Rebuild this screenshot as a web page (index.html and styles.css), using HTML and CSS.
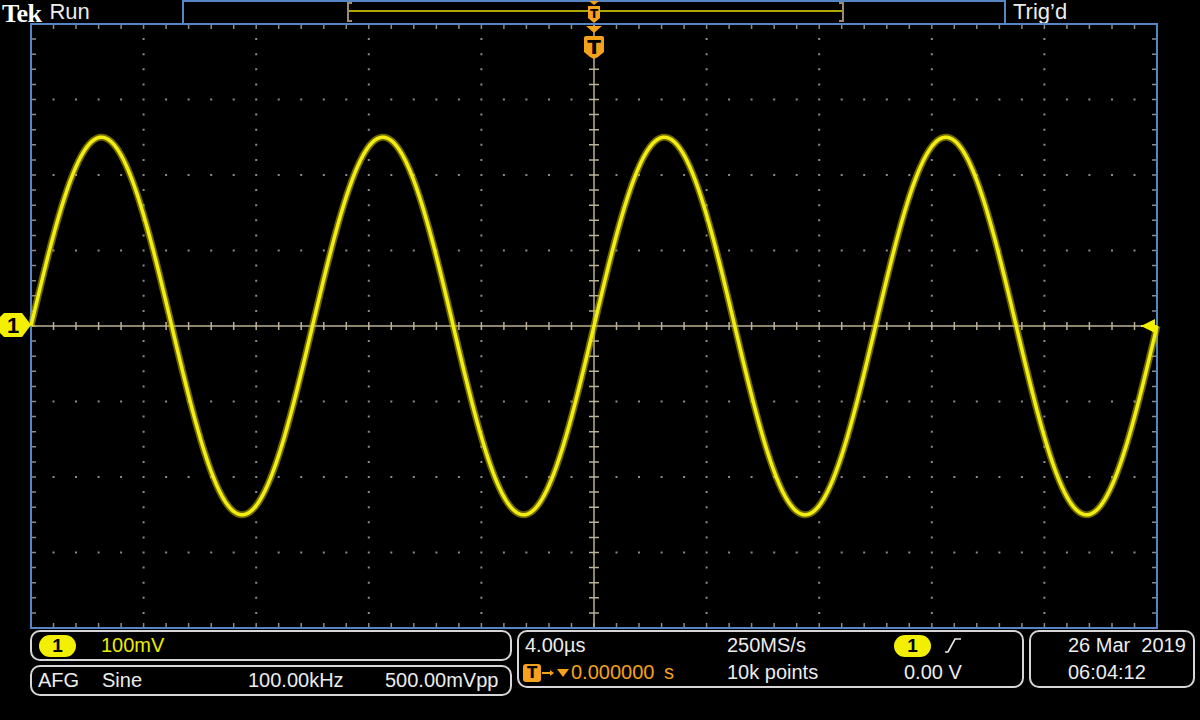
FILE: index.html
```html
<!DOCTYPE html>
<html lang="en">

<head>
    <meta charset="UTF-8">
    <title>Tek Scope</title>
    <link rel="stylesheet" href="styles.css">
</head>

<body>
    <div class="scope">
        <header class="topbar">
            <div class="brand">
                <span class="tek">Tek</span>
                <span class="state">Run</span>
            </div>
            <div class="record">
                <svg width="824" height="23" viewBox="0 0 824 23">
                    <rect x="1" y="1" width="822" height="30" class="frame" />
                    <line x1="167" y1="11" x2="660" y2="11" class="rec-trace" />
                    <path d="M170 3 H166 V21 H170" class="bracket" />
                    <path d="M657 3 H661 V21 H657" class="bracket" />
                    <polygon points="407,1 417,1 412,5" class="orange" />
                    <path d="M406 6 H418 V18 L412 23 L406 18 Z" class="orange" />
                    <text x="412" y="18" class="t-mark small">T</text>
                </svg>
            </div>
            <div class="trig">Trig’d</div>
        </header>

        <svg class="screen" width="1200" height="607" viewBox="0 23 1200 607">
            <path id="dots" class="dots" />
            <path id="ticks" class="ticks" />
            <path id="center" class="center" />
            <rect x="31" y="24" width="1126" height="604" class="frame" />
            <path id="glow" class="glow" />
            <path id="trace" class="trace" />

            <!-- trigger position marker -->
            <polygon points="586,26 602,26 594,33" class="orange" />
            <path d="M586 36 H602 Q604 36 604 38 V52 L598 57 L594 59 L590 57 L584 52 V38 Q584 36 586 36 Z" class="orange" />
            <text x="594" y="54" class="t-mark">T</text>

            <!-- channel 1 ground marker -->
            <polygon points="4,313 22,313 31,325 22,337 4,337 0,333 0,317" class="yellow" />
            <text x="13" y="333" class="ch-mark">1</text>

            <!-- trigger level marker -->
            <line x1="1141" y1="326" x2="1157" y2="326" class="level" />
            <polygon points="1141,326 1155,319 1155,333" class="yellow" />
        </svg>

        <footer class="status">
            <div class="stack">
                <div class="panel ch">
                    <span class="pill">1</span>
                    <span class="volts">100mV</span>
                </div>
                <div class="panel afg">
                    <span>AFG</span>
                    <span>Sine</span>
                    <span>100.00kHz</span>
                    <span>500.00mVpp</span>
                </div>
            </div>
            <div class="panel horiz">
                <span>4.00µs</span>
                <span>250MS/s</span>
                <span class="trig-src">
                    <span class="pill">1</span>
                    <svg class="slope" width="18" height="17" viewBox="0 0 18 17">
                        <polyline points="1,15 4,15 11,2 17,2" />
                    </svg>
                </span>
                <span class="delay">
                    <span class="t-box">T</span>
                    <svg width="30" height="18" viewBox="0 0 30 18">
                        <line x1="1" y1="9" x2="10" y2="9" class="arrow" />
                        <polygon points="9,6 13,9 9,12" class="orange" />
                        <polygon points="16,5 28,5 22,13" class="orange" />
                    </svg>
                    <span class="delay-val">0.000000 s</span>
                </span>
                <span>10k points</span>
                <span class="level-val">0.00 V</span>
            </div>
            <div class="panel clock">
                <span>26 Mar  2019</span>
                <span>06:04:12</span>
            </div>
        </footer>
    </div>

    <script>
        const L = 31, R = 1157, T = 24, B = 628;
        const DX = (R - L) / 10, DY = (B - T) / 8;
        const CX = L + DX * 5, CY = T + DY * 4;

        function buildGrid() {
            let dots = '';
            let ticks = '';
            let center = `M${L} ${CY} H${R} M${CX} ${T} V${B}`;

            // dotted major lines
            for (let i = 1; i < 10; i++) {
                if (i === 5) continue;
                const x = L + i * DX;
                for (let k = 1; k < 40; k++) {
                    const y = T + k * DY / 5;
                    dots += `M${(x - 1).toFixed(1)} ${(y - 1).toFixed(1)}h2v2h-2z`;
                }
            }
            for (let j = 1; j < 8; j++) {
                if (j === 4) continue;
                const y = T + j * DY;
                for (let k = 1; k < 50; k++) {
                    const x = L + k * DX / 5;
                    dots += `M${(x - 1).toFixed(1)} ${(y - 1).toFixed(1)}h2v2h-2z`;
                }
            }

            // ticks along the edges and the center cross
            for (let k = 1; k < 50; k++) {
                const x = (L + k * DX / 5).toFixed(1);
                ticks += `M${x} ${T + 1}v4M${x} ${B - 1}v-4`;
                center += `M${x} ${CY - 4}v8`;
            }
            for (let k = 1; k < 40; k++) {
                const y = (T + k * DY / 5).toFixed(1);
                ticks += `M${L + 1} ${y}h4M${R - 1} ${y}h-4`;
                center += `M${CX - 5} ${y}h10`;
            }

            document.getElementById('dots').setAttribute('d', dots);
            document.getElementById('ticks').setAttribute('d', ticks);
            document.getElementById('center').setAttribute('d', center);
        }

        function buildTrace() {
            // 100 kHz sine, 500 mVpp, 4 us/div, 100 mV/div
            const period = DX * 2.5;
            const amp = DY * 2.5;
            let d = '';
            for (let x = L; x <= R; x += 1) {
                const y = CY - amp * Math.sin(2 * Math.PI * (x - CX) / period);
                d += (d ? 'L' : 'M') + x + ' ' + y.toFixed(2);
            }
            document.getElementById('glow').setAttribute('d', d);
            document.getElementById('trace').setAttribute('d', d);
        }

        buildGrid();
        buildTrace();
    </script>
</body>

</html>
```

FILE: styles.css
```css
body {
    margin: 0;
    background: #000;
    color: #ececec;
    font-family: "Liberation Sans", Arial, sans-serif;
    overflow: hidden;
}

.scope {
    width: 1200px;
    height: 720px;
    background: #000;
}

svg {
    display: block;
}

/* Top bar */
.topbar {
    display: flex;
    height: 23px;
}

.brand {
    width: 182px;
    display: flex;
    align-items: flex-start;
}

.tek {
    font-family: "Liberation Serif", "Times New Roman", serif;
    font-weight: bold;
    font-size: 26px;
    line-height: 26px;
    margin-top: 1px;
    letter-spacing: -0.5px;
    color: #fff;
    margin-left: 2px;
}

.state {
    font-size: 22px;
    line-height: 23px;
    margin-left: 8px;
}

.record {
    width: 824px;
}

.trig {
    font-size: 22px;
    line-height: 23px;
    padding-left: 7px;
}

.frame {
    fill: none;
    stroke: #5585c2;
    stroke-width: 2;
}

.rec-trace {
    stroke: #e8e000;
    stroke-width: 1.5;
}

.bracket {
    fill: none;
    stroke: #9c8c6c;
    stroke-width: 2;
}

.orange {
    fill: #f4a21c;
}

.yellow {
    fill: #f2f000;
}

.t-mark {
    font-family: "DejaVu Sans", sans-serif;
    font-weight: bold;
    font-size: 20px;
    fill: #000;
    text-anchor: middle;
}

.t-mark.small {
    font-size: 12px;
}

.ch-mark {
    font-family: "Liberation Sans", Arial, sans-serif;
    font-weight: bold;
    font-size: 22px;
    fill: #000;
    text-anchor: middle;
}

/* Graticule */
.dots {
    fill: #8a8a8a;
}

.ticks {
    fill: none;
    stroke: #8a8a8a;
    stroke-width: 1.5;
}

.center {
    fill: none;
    stroke: #bcb095;
    stroke-width: 1.5;
}

.glow {
    fill: none;
    stroke: #c4bc00;
    stroke-width: 7;
    stroke-opacity: 0.55;
}

.trace {
    fill: none;
    stroke: #f4ee10;
    stroke-width: 3.5;
}

.level {
    stroke: #f2f000;
    stroke-width: 2;
}

/* Status readouts */
.status {
    display: flex;
    gap: 5px;
    padding-left: 30px;
    font-size: 20px;
    line-height: 27px;
}

.stack {
    width: 482px;
    display: flex;
    flex-direction: column;
    gap: 4px;
}

.panel {
    border: 2px solid #d6d6d6;
    border-radius: 10px;
    box-sizing: border-box;
}

.ch {
    height: 31px;
    display: flex;
    align-items: center;
    padding-left: 7px;
}

.pill {
    display: inline-flex;
    justify-content: center;
    align-items: center;
    width: 37px;
    height: 22px;
    border-radius: 11px;
    background: #f2f000;
    color: #000;
    font-weight: bold;
    font-size: 19px;
}

.volts {
    margin-left: 25px;
    color: #ecec00;
}

.afg {
    height: 31px;
    display: grid;
    grid-template-columns: 64px 146px 137px auto;
    align-items: center;
    padding-left: 6px;
}

.horiz {
    width: 507px;
    height: 58px;
    display: grid;
    grid-template-columns: 202px 167px auto;
    grid-template-rows: 27px 27px;
    align-items: center;
    padding-left: 6px;
}

.trig-src {
    display: flex;
    align-items: center;
}

.slope {
    margin-left: 13px;
}

.slope polyline {
    fill: none;
    stroke: #ececec;
    stroke-width: 1.6;
}

.delay {
    display: flex;
    align-items: center;
    margin-left: -2px;
    color: #f4a21c;
}

.t-box {
    width: 18px;
    height: 18px;
    border-radius: 3px;
    background: #f4a21c;
    color: #000;
    font-family: "DejaVu Sans", sans-serif;
    font-weight: bold;
    font-size: 15px;
    line-height: 18px;
    text-align: center;
}

.arrow {
    stroke: #f4a21c;
    stroke-width: 2;
}

.delay-val {
    word-spacing: 4px;
}

.level-val {
    padding-left: 10px;
}

.clock {
    width: 166px;
    height: 58px;
    display: flex;
    flex-direction: column;
    padding-left: 37px;
    white-space: pre;
}
```
